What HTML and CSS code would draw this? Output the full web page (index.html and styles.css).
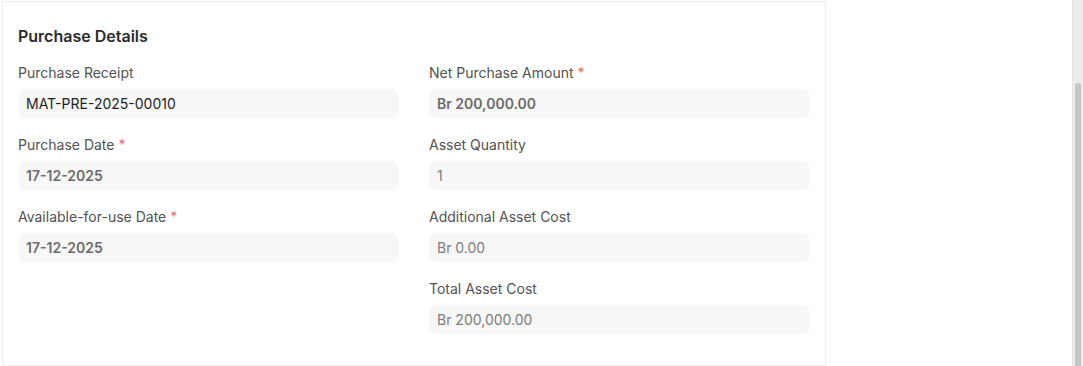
FILE: index.html
```html
<!DOCTYPE html>
<html lang="en">
<head>
  <meta charset="UTF-8" />
  <meta name="viewport" content="width=device-width, initial-scale=1.0">
  <title>Purchase Details</title>
  <link rel="stylesheet" href="styles.css">
</head>
<body>
  <div class="page">
    <div class="card">
      <h2 class="section-title">Purchase Details</h2>
      <div class="columns">
        <div class="column">
          <div class="form-group">
            <label>Purchase Receipt</label>
            <div class="control link">MAT-PRE-2025-00010</div>
          </div>
          <div class="form-group">
            <label>Purchase Date <span class="reqd">*</span></label>
            <div class="control strong">17-12-2025</div>
          </div>
          <div class="form-group">
            <label>Available-for-use Date <span class="reqd">*</span></label>
            <div class="control strong">17-12-2025</div>
          </div>
        </div>
        <div class="column">
          <div class="form-group">
            <label>Net Purchase Amount <span class="reqd">*</span></label>
            <div class="control strong">Br 200,000.00</div>
          </div>
          <div class="form-group">
            <label>Asset Quantity</label>
            <div class="control">1</div>
          </div>
          <div class="form-group">
            <label>Additional Asset Cost</label>
            <div class="control">Br 0.00</div>
          </div>
          <div class="form-group">
            <label>Total Asset Cost</label>
            <div class="control">Br 200,000.00</div>
          </div>
        </div>
      </div>
    </div>
    <div class="scrollbar"><div class="thumb"></div></div>
  </div>
</body>
</html>
```

FILE: styles.css
```css
html, body {
  margin: 0;
  padding: 0;
  height: 100%;
  background: #ffffff;
  font-family: 'Inter', 'Noto Sans', sans-serif;
  color: #525252;
  overflow: hidden;
}
.page {
  display: flex;
  height: 366px;
}
.card {
  width: 792px;
  margin: 1px 0 0 2px;
  padding: 0 15px;
  border: 1px solid #ededed;
  height: 363px;
  flex-shrink: 0;
}
.section-title {
  margin: 24px 0 0;
  font-size: 16px;
  line-height: 20px;
  font-weight: 600;
  color: #2b2b2b;
}
.columns {
  display: grid;
  grid-template-columns: 381px 381px;
  column-gap: 30px;
  margin-top: 17px;
}
.form-group {
  margin-bottom: 17px;
}
label {
  display: block;
  font-size: 14px;
  line-height: 20px;
  color: #525252;
  margin-bottom: 6px;
}
.reqd {
  color: #e86c6c;
}
.control {
  height: 29px;
  line-height: 29px;
  padding: 0 8px;
  background: #f7f7f7;
  border-radius: 8px;
  font-size: 14px;
  color: #7c7c7c;
}
.control.link {
  color: #1f1f1f;
}
.control.strong {
  font-weight: 600;
  color: #6b6b6b;
}
.scrollbar {
  margin-left: auto;
  width: 10px;
  background: #ececec;
  border-left: 1px solid #e4e4e4;
  display: flex;
  justify-content: center;
}
.thumb {
  width: 6px;
  margin-top: 83px;
  height: 283px;
  background: #c4c4c4;
  border-radius: 3px 3px 0 0;
}
```
